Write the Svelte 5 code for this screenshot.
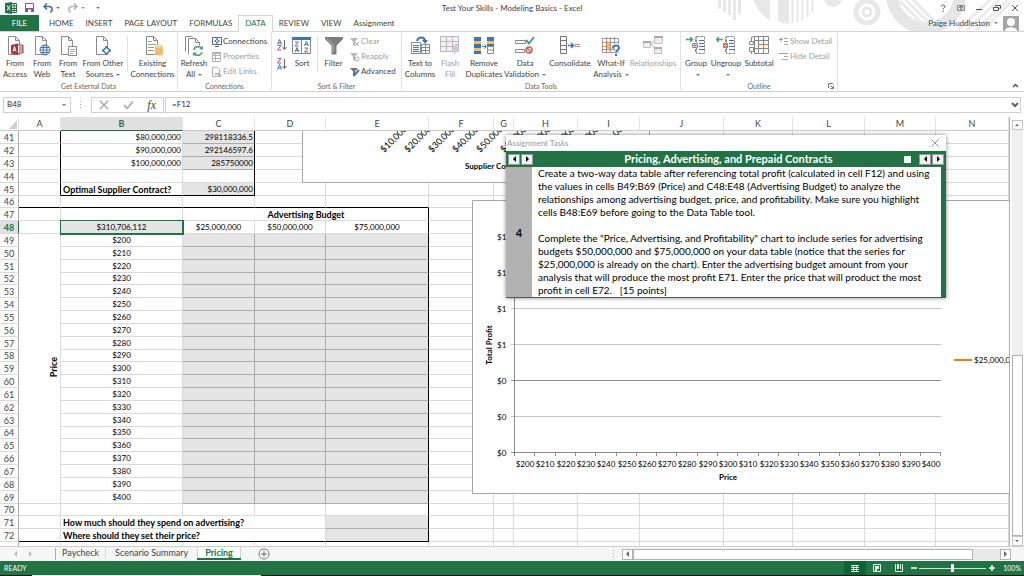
<script>
  const page = '<path d="M3.5 .5h7l4 4v14h-11z" fill="#fff" stroke="#8a8a8a"/><path d="M10.500 .5v4h4" fill="none" stroke="#8a8a8a"/>';
  const art = {
    access: page + '<path d="M6 9l7-1.500v11.500l-7-1.500z" fill="#a4373a"/><path d="M13 9h5v8h-5" fill="#fff" stroke="#a4373a"/><path d="M14 11h4M14 13h4M14 15h4" stroke="#a4373a"/><path d="M8 15.500l1.500-5 1.500 5M8.500 14h2" fill="none" stroke="#fff"/>',
    web: page + '<circle cx="13" cy="14" r="5" fill="#fff" stroke="#3b77b5"/><ellipse cx="13" cy="14" rx="2" ry="5" fill="none" stroke="#3b77b5"/><path d="M8 14h10M9 11.500h8M9 16.500h8" stroke="#3b77b5"/>',
    text: page + '<path d="M10.500 10.500h8v9h-8z" fill="#fff" stroke="#8a8a8a"/><path d="M12 13.500h5M12 15.500h5M12 17.500h3" stroke="#aaa"/>',
    other: page + '<path d="M13.500 10v9M9 14.500h9" stroke="#3b77b5" stroke-width="2"/><path d="M13.500 11l3.500 3.500-3.500 3.500-3.500-3.500z" fill="#fff" stroke="#3b77b5" stroke-width="1.500"/>',
    existing: page + '<path d="M5 5.500h4M5 8.500h8M5 11.500h6M5 14.500h6" stroke="#999"/><path d="M12 10v8c0 2 8 2 8 0v-8z" fill="#ecc06c"/><ellipse cx="16" cy="10" rx="4" ry="1.500" fill="#f6dca5"/>',
    refresh: '<path d="M1.500 15.500v-15h6l1 1" fill="none" stroke="#8a8a8a"/><path d="M4.500 18.500v-16h7l4 4v3M11.500 2.500v4h4" fill="#fff" stroke="#8a8a8a"/><circle cx="14" cy="15" r="5.500" fill="#fff"/><path d="M10 14c.5-4 6-4.500 7.500-1.500M18 16c-.5 4-6 4.500-7.500 1.500" fill="none" stroke="#5da283" stroke-width="1.800"/><path d="M19 9.500v4h-4zM9 20.500v-4h4z" fill="#5da283"/>',
    sort: '<path d="M.5 2.500h18v15h-18z" fill="#fff" stroke="#8a8a8a"/><path d="M0 1h19v3H0z" fill="#3b77b5"/><path d="M9.500 4v13" stroke="#8a8a8a"/><path d="M3 6h3.500l-3.500 4h3.500M12.500 12h3.500l-3.500 4h3.500" fill="none" stroke="#9158ad"/><path d="M3 16l2-4.500 2 4.500M3.500 14.500h3M12.500 10l2-4.500 2 4.500M13 8.500h3" fill="none" stroke="#3b77b5"/>',
    filter: '<path d="M1 1h18v2l-6.500 6.500v9h-5v-9l-6.500-6.500z" fill="#7c7c7c"/><path d="M3 2.500l6 6v8" fill="none" stroke="#bbb"/>',
    columns: '<path d="M1.500 6.500h9v11h-9z" fill="#fff" stroke="#8a8a8a"/><path d="M3 9.500h6M3 11.500h6M3 13.500h6M3 15.500h6" stroke="#3b77b5"/><path d="M11.500 8.500h8v9h-8zM15.500 8v9M12 11.500h7M12 14.500h7" fill="#fff" stroke="#8a8a8a"/><path d="M7 5c1-4 7-5 8-.5" fill="none" stroke="#3b77b5" stroke-width="2"/><path d="M12 4h6l-3 4z" fill="#3b77b5"/>',
    flash: '<path d="M.5 .5h18v15h-18zM6.500 1v14M12.500 1v14M1 5.500h17M1 10.500h17" fill="#f4eff3" stroke="#bcb6bb"/><path d="M15 8h4l-2 4h3l-7 8 2-6h-3z" fill="#cfcacf"/>',
    remove: '<path d="M0 1h7v17H0zM13 1h7v9h-7z" fill="#3b77b5"/><path d="M0 5h7v3H0zM0 12h7v3H0zM13 5h7v3h-7z" fill="#ecc06c"/><path d="M13.500 10.500h6v7h-6zM14 14h6" fill="#fff" stroke="#8a8a8a"/><path d="M8 10.500h4M10.500 8.500l2 2-2 2" fill="none" stroke="#3b77b5"/>',
    validation: '<path d="M.5 4.500h10v3h-10zM.5 13.500h9v3h-9z" fill="#fff" stroke="#8a8a8a"/><path d="M11 4l3 3.500 5-6.500" fill="none" stroke="#4f9d7c" stroke-width="2"/><circle cx="14" cy="14" r="3" fill="#fff" stroke="#d2604a" stroke-width="1.500"/><path d="M12 12l4 4" stroke="#d2604a" stroke-width="1.500"/>',
    consolidate: '<path d="M.5 .5h6v17h-6zM0 4.500h6M0 9.500h6M0 13.500h6" fill="#fff" stroke="#777"/><path d="M8 9.500h5M11 7l2.500 2.500-2.500 2.500" fill="none" stroke="#3b77b5" stroke-width="1.500"/><path d="M20 8.500h-5v2h5" fill="none" stroke="#d9826f"/>',
    whatif: '<path d="M1.500 2.500h16v14h-16zM5.500 1v16M9.500 1v16M13.500 1v16M1 6.500h16M1 10.500h16M1 13.500h16" fill="#fff" stroke="#9a9a9a"/><path d="M5.500 6h4v8h-4z" fill="#eeb286" stroke="#d9793b" stroke-dasharray="2 1"/><path d="M12 12.500c0-4 6-4 6-.5 0 2-3 2-3 4.500M15 18v2" fill="none" stroke="#fff" stroke-width="4"/><path d="M12 12.500c0-4 6-4 6-.5 0 2-3 2-3 4.500M15 17.700v2.300" fill="none" stroke="#3b77b5" stroke-width="2"/>',
    relations: '<path d="M8 8l5-4M8 8l5 6" stroke="#aaa"/><path d="M.5 5.500h7v6h-7zM11.500 .5h8v7h-8zM11.500 11.500h7v6h-7z" fill="#f1edf1" stroke="#c4bec4"/><path d="M0 6h8M11 1h9M11 12h8" stroke="#aaa" stroke-width="2"/>',
    group: '<path d="M0 3.500h6M4 1l2.500 2.500-2.500 2.500" fill="none" stroke="#4f9d7c" stroke-width="1.500"/><path d="M10.500 .5h8v17h-8zM9.500 6v-5M9.500 13v4" fill="#fff" stroke="#888" stroke-dasharray="3 1"/><path d="M6.500 7.500h5v4h-5zM7 9.500h4M9 8v3" fill="#fff" stroke="#888"/><path d="M13 4.500h5M13 7.500h5M13 10.500h5M13 13.500h5" stroke="#3b77b5"/>',
    ungroup: '<path d="M7 3.500h-6M3 1l-2.500 2.500 2.500 2.500" fill="none" stroke="#4f9d7c" stroke-width="1.500"/><path d="M10.500 .5h8v17h-8zM9.500 6v-5M9.500 13v4" fill="#fff" stroke="#888" stroke-dasharray="3 1"/><path d="M7.500 7.500h4v4h-4zM8 11l3-3M8 8l3 3" fill="#fff" stroke="#d2604a"/><path d="M13 4.500h5M13 7.500h5M13 10.500h5M13 13.500h5" stroke="#3b77b5"/>',
    subtotal: '<path d="M5.500 .5h14v17h-14zM9.500 0v17M14.500 0v17M5 4.500h14M5 12.500h14" fill="#fff" stroke="#888"/><path d="M.5 5.500h4v3h-4zM.5 11.500h4v4h-4zM2.500 5v-4h3M2.500 15v3" fill="#fff" stroke="#888"/><path d="M10 8.500h4M15 8.500h4" stroke="#d9793b"/>',
    connections: '<path d="M.5 .5h9v7h-9zM3 9.500h4" fill="#fff" stroke="#666"/><path d="M5 1v6M2 4h6" stroke="#3b77b5"/><circle cx="5" cy="4" r="1.500" fill="#fff" stroke="#3b77b5"/>',
    properties: '<path d="M.5 .5h8v9h-8zM1 3.500h7M1 6.500h7M3.500 1v8" fill="#fff" stroke="#b5afb5"/><path d="M0 1h9" stroke="#b5afb5" stroke-width="2"/>',
    links: '<path d="M.5 .5h5l2 2v7h-7z" fill="#fff" stroke="#b5afb5"/><path d="M3 7h3M6 9h3M6 6l3 3" stroke="#aaa" stroke-width="1.500"/>',
    clear: '<path d="M0 1h8l-3 3.500v4h-2v-4z" fill="#b8b8b8"/><path d="M5 5l4 4M9 5l-4 4" stroke="#aaa"/>',
    reapply: '<path d="M0 1h8l-3 3.500v4h-2v-4z" fill="#b8b8b8"/><circle cx="7" cy="7" r="2" fill="#fff" stroke="#aaa"/>',
    advanced: '<path d="M0 1h8l-3 3.500v4h-2v-4z" fill="#777"/><path d="M3.500 9l5.500-6" stroke="#3b77b5" stroke-width="2"/>',
    show: '<path d="M0 2.500h4M2 .5v4" stroke="#999"/><path d="M5 1.500h4M5 4.500h4M5 7.500h4" stroke="#a9a9a9"/>',
    hide: '<path d="M0 1.500h4" stroke="#999"/><path d="M4 1.500h5M5 4.500h4M3 7.500h6" stroke="#a9a9a9"/>'
  };

  const external = [
    { i: 'access', l: ['From', 'Access'], w: 30 },
    { i: 'web', l: ['From', 'Web'], w: 24 },
    { i: 'text', l: ['From', 'Text'], w: 28 },
    { i: 'other', l: ['From Other', 'Sources'], w: 42, menu: true }
  ];
  const tools = [
    { i: 'columns', l: ['Text to', 'Columns'], w: 36 },
    { i: 'flash', l: ['Flash', 'Fill'], w: 24, off: true },
    { i: 'remove', l: ['Remove', 'Duplicates'], w: 44 },
    { i: 'validation', l: ['Data', 'Validation'], w: 38, menu: true },
    { i: 'consolidate', l: ['Consolidate'], w: 52 },
    { i: 'whatif', l: ['What-If', 'Analysis'], w: 30, menu: true },
    { i: 'relations', l: ['Relationships'], w: 54, off: true }
  ];
  const outline = [
    { i: 'group', l: ['Group', ''], w: 30, menu: true },
    { i: 'ungroup', l: ['Ungroup', ''], w: 30, menu: true },
    { i: 'subtotal', l: ['Subtotal'], w: 36 }
  ];

  const letters = 'ABCDEFGHIJKLMN'.split('');
  const widths = [42, 122, 72, 71, 103, 65, 20, 64, 62, 84, 69, 72, 71];
  const top = {
    41: ['$80,000,000', '298118336.5'],
    42: ['$90,000,000', '292146597.6'],
    43: ['$100,000,000', '285750000'],
    44: ['', ''],
    45: ['Optimal Supplier Contract?', '$30,000,000']
  };

  function cellsFor(n) {
    const out = [];
    const add = (t = '', c = '', span = 1, rows = 1) => out.push({ t, c, span, rows });
    if (n <= 45) {
      const end = n === 45 ? ' kb' : '';
      add('', 'kr');
      add(top[n][0], (n === 45 ? 'bold' : 'right') + end);
      add(top[n][1], 'right kr' + (n === 44 ? '' : ' fill') + end);
      add(); add();
    } else if (n === 46) {
      for (let k = 0; k < 5; k++) add('', 'kb');
    } else if (n === 47) {
      add(); add();
      add('Advertising Budget', 'bold center kr', 3);
    } else if (n === 48) {
      add();
      add('$310,706,112', 'center fill active');
      add('$25,000,000', 'center');
      add('$50,000,000', 'center');
      add('$75,000,000', 'center kr');
    } else if (n <= 69) {
      if (n === 49) add('Price', 'axis', 1, 21);
      add('$' + (200 + (n - 49) * 10), 'center');
      add('', 'fill'); add('', 'fill'); add('', 'fill kr');
    } else if (n === 70) {
      add(); add(); add(); add(); add('', 'kr');
    } else if (n <= 72) {
      const end = n === 72 ? ' kb' : '';
      add('', end);
      add(n === 71 ? 'How much should they spend on advertising?' : 'Where should they set their price?', 'bold' + end, 3);
      add('', 'fill kr' + end);
    } else {
      for (let k = 0; k < 5; k++) add();
    }
    for (let k = 0; k < 9; k++) add();
    return out;
  }
  const rows = Array.from({ length: 33 }, (_, k) => ({ n: 41 + k, cells: cellsFor(41 + k) }));

  const supplierTicks = Array.from({ length: 10 }, (_, k) => '$' + (k + 1) * 10 + ',000,000');
  const priceTicks = Array.from({ length: 21 }, (_, k) => '$' + (200 + k * 10));
  const profitTicks = ['$1', '$1', '$1', '$1', '$0', '$0', '$0'];
  let zoom = $state(50);
</script>

{#snippet big(b)}
  <button class="big" class:off={b.off} style="width:{b.w}px">
    <svg width="20" height="20" viewBox="0 0 20 20" aria-hidden="true">{@html art[b.i]}</svg>
    {#each b.l as line, k}
      <span>{line}{#if b.menu && k === b.l.length - 1}<i class="caret"></i>{/if}</span>
    {/each}
  </button>
{/snippet}

{#snippet small(icon, text, off)}
  <button class="small" class:off>
    <svg width="10" height="10" viewBox="0 0 10 10" aria-hidden="true">{@html art[icon]}</svg>{text}
  </button>
{/snippet}

<div class="app">
  <header>
    <svg class="pattern" width="300" height="31" viewBox="0 0 300 31" aria-hidden="true">
      <g fill="#e8e8e8">
        <path d="M0 0h3v9H0zM5 0h3v12H5zM10 0h3v15h-3zM15 0h3v20h-3zM20 0h3v14h-3zM35 0h17v20q-10-5-17-20z" />
        <path d="M46 0h6v20q-4-2-6-5zM60 0h11v24q-6 0-11-3z" />
        <circle cx="115" cy="-2" r="9" />
      </g>
      <path d="M74.500 0v23M79.500 0v22M84.500 0v20M89.500 0v17M94.500 0v12" stroke="#e8e8e8" stroke-width="2" />
      <circle cx="149" cy="12" r="11" fill="none" stroke="#e8e8e8" stroke-width="5" />
      <circle cx="149" cy="12" r="4" fill="none" stroke="#e8e8e8" stroke-width="3" />
      <circle cx="208" cy="-6" r="34" fill="none" stroke="#e6e6e6" stroke-width="12" />
      <path d="M182 1l26 26M188 0l24 24M195 0l20 20M240 30l32-30M249 30l32-30M258 30l32-30M267 28l26-26" stroke="#ebebeb" stroke-width="3" />
    </svg>
    <div class="titlebar">
      <div class="quick">
        <svg width="12" height="12" viewBox="0 0 12 12" aria-label="Excel"><path d="M6.500 1.500h5v9h-5M7 4h4M7 6.500h4M7 8.500h4M9 2v8" fill="#fff" stroke="#217346" /><path d="M0 1l7-1v12l-7-1z" fill="#217346" /><path d="M2 3.500l3 5M5 3.500l-3 5" stroke="#fff" /></svg>
        <button aria-label="Save"><svg width="10" height="10" viewBox="0 0 10 10"><path d="M.5 .5h8v8h-8z" fill="#fff" stroke="#7b5aa6" /><path d="M0 5h9v4H0z" fill="#7b5aa6" /><path d="M3 6.500h3v3H3z" fill="#fff" /></svg></button>
        <button aria-label="Undo"><svg width="17" height="10" viewBox="0 0 17 10"><path d="M1 3.500h5c4 0 4 5 1 5.500M4 .5l-3 3 3 3" fill="none" stroke="#3b70b0" stroke-width="1.500" /><path d="M13 4h4l-2 2z" fill="#777" /></svg></button>
        <button aria-label="Redo"><svg width="17" height="10" viewBox="0 0 17 10"><path d="M9 3.500h-5c-4 0-4 5-1 5.500M6 .5l3 3-3 3" fill="none" stroke="#b4b4b4" stroke-width="1.500" /><path d="M13 4h4l-2 2z" fill="#999" /></svg></button>
        <button aria-label="Customize toolbar"><i class="caret"></i></button>
      </div>
      <h1>Test Your Skills - Modeling Basics - Excel</h1>
      <div class="winbtns">
        <button aria-label="Help"><svg width="8" height="8" viewBox="0 0 8 8"><path d="M2 2.500c0-2 4-2 4 0 0 1.500-2 1-2 3M4 6.500v1.500" fill="none" stroke="#555" /></svg></button>
        <button aria-label="Ribbon display"><svg width="8" height="8" viewBox="0 0 8 8"><path d="M.5 1.500h7v5h-7z" fill="#ddd" stroke="#888" /><path d="M4 2.500v4M2 4l2-2 2 2" fill="none" stroke="#666" /></svg></button>
        <button aria-label="Minimize"><svg width="8" height="8" viewBox="0 0 8 8"><path d="M1 5.500h6" stroke="#555" /></svg></button>
        <button aria-label="Restore"><svg width="8" height="8" viewBox="0 0 8 8"><path d="M2.500 2.500v-1h5v3h-1M.5 3.500h5v3h-5z" fill="none" stroke="#555" /></svg></button>
        <button aria-label="Close"><svg width="8" height="8" viewBox="0 0 8 8"><path d="M1 1l6 6M7 1l-6 6" stroke="#555" /></svg></button>
      </div>
    </div>
    <nav>
      <button class="file">FILE</button>
      {#each ['HOME', 'INSERT', 'PAGE LAYOUT', 'FORMULAS', 'DATA', 'REVIEW', 'VIEW', 'Assignment'] as tab}
        <button class="tab" class:current={tab === 'DATA'}>{tab}</button>
      {/each}
      <button class="user">Paige Huddleston<i class="caret"></i>
        <svg width="16" height="15" viewBox="0 0 16 15" aria-hidden="true"><path d="M0 0h16v15H0z" fill="#a5a5a5" /><circle cx="8" cy="6" r="4" fill="#fff" /><path d="M2 15c0-5 12-5 12 0z" fill="#fff" /></svg>
      </button>
    </nav>
  </header>

  <section class="ribbon">
    <div class="group">
      <div class="items">
        {#each external as b}{@render big(b)}{/each}
        <hr />
        {@render big({ i: 'existing', l: ['Existing', 'Connections'], w: 49 })}
      </div>
      <span class="label">Get External Data</span>
    </div>
    <div class="group links">
      <div class="items">
        {@render big({ i: 'refresh', l: ['Refresh', 'All'], w: 32, menu: true })}
        <div class="stack">
          {@render small('connections', 'Connections', false)}
          {@render small('properties', 'Properties', true)}
          {@render small('links', 'Edit Links', true)}
        </div>
      </div>
      <span class="label">Connections</span>
    </div>
    <div class="group sorting">
      <div class="items">
        <div class="az">
          <button aria-label="Sort A to Z"><svg width="10" height="12" viewBox="0 0 10 12"><path d="M.5 5.500l2-5 2 5M1 4h3" fill="none" stroke="#3b77b5" /><path d="M.5 6.500h3.500l-3.500 4.500h4" fill="none" stroke="#9158ad" /><path d="M7.500 1v9M5.500 8l2 2.500 2-2.500" fill="none" stroke="#666" /></svg></button>
          <button aria-label="Sort Z to A"><svg width="10" height="12" viewBox="0 0 10 12"><path d="M.5 .5h3.500l-3.500 4.500h4" fill="none" stroke="#9158ad" /><path d="M.5 11.500l2-5 2 5M1 10h3" fill="none" stroke="#3b77b5" /><path d="M7.500 1v9M5.500 8l2 2.500 2-2.500" fill="none" stroke="#666" /></svg></button>
        </div>
        {@render big({ i: 'sort', l: ['Sort'], w: 20 })}
        <hr />
        {@render big({ i: 'filter', l: ['Filter'], w: 31 })}
        <div class="stack tight">
          {@render small('clear', 'Clear', true)}
          {@render small('reapply', 'Reapply', true)}
          {@render small('advanced', 'Advanced', false)}
        </div>
      </div>
      <span class="label">Sort &amp; Filter</span>
    </div>
    <div class="group">
      <div class="items">{#each tools as b}{@render big(b)}{/each}</div>
      <span class="label">Data Tools</span>
    </div>
    <div class="group outline">
      <div class="items">
        {#each outline as b}{@render big(b)}{/each}
        <div class="stack">
          {@render small('show', 'Show Detail', true)}
          {@render small('hide', 'Hide Detail', true)}
        </div>
      </div>
      <span class="label">Outline</span>
      <svg class="launch" width="6" height="6" viewBox="0 0 6 6" aria-hidden="true"><path d="M.5 5v-4.500h4.500M2.500 2.500l3 3M5.500 2.500v3h-3" fill="none" stroke="#777" /></svg>
    </div>
    <button class="collapse" aria-label="Collapse ribbon"><svg width="7" height="5" viewBox="0 0 7 5"><path d="M1 4l2.500-2.500 2.500 2.500" fill="none" stroke="#555" stroke-width="1.500" /></svg></button>
  </section>

  <section class="formula">
    <div class="namebox"><input aria-label="Name box" value="B48" /><i class="caret"></i></div>
    <span class="dots"></span>
    <div class="entry">
      <button aria-label="Cancel"><svg width="10" height="10" viewBox="0 0 10 10"><path d="M1 1l8 8M9 1l-8 8" stroke="#a9a9a9" stroke-width="1.500" /></svg></button>
      <button aria-label="Enter"><svg width="11" height="10" viewBox="0 0 11 10"><path d="M1 5l3 3.500 6-7" fill="none" stroke="#b9b9b9" stroke-width="2" /></svg></button>
      <button class="fx">fx</button>
    </div>
    <div class="bar"><input aria-label="Formula" value="=F12" /><svg width="8" height="6" viewBox="0 0 8 6" aria-hidden="true"><path d="M1 1l3 3 3-3" fill="none" stroke="#666" stroke-width="2" /></svg></div>
  </section>

  <main>
    <div class="sheet">
      <table>
        <colgroup>
          <col style="width:19px" />
          {#each widths as w}<col style="width:{w}px" />{/each}
          <col />
        </colgroup>
        <thead>
          <tr><th class="corner" aria-label="Select all"></th>{#each letters as l}<th class:picked={l === 'B'}>{l}</th>{/each}</tr>
        </thead>
        <tbody>
          {#each rows as r}
            <tr>
              <th class:picked={r.n === 48}>{r.n > 72 ? '' : r.n}</th>
              {#each r.cells as c}
                <td class={c.c} colspan={c.span} rowspan={c.rows}>{#if c.c === 'axis'}<span>{c.t}</span>{:else}{c.t}{/if}</td>
              {/each}
            </tr>
          {/each}
        </tbody>
      </table>

      <div class="floating">
        <svg class="chart supplier" width="348" height="52" viewBox="0 0 348 52">
          <path d="M.5 0v51.500h347V0" fill="#fff" stroke="#a6a6a6" />
          {#each supplierTicks as t, k}
            <text class="slant" transform="translate({82 + 24 * k} 22) rotate(-45)">{t}</text>
          {/each}
          <text class="b" x="163" y="38">Supplier Contract</text>
        </svg>

        <svg class="chart profit" width="560" height="294" viewBox="0 0 560 294">
          <path d="M.5 .5h559v293h-559z" fill="#fff" stroke="#a6a6a6" />
          {#each profitTicks as t, k}
            <path d="M39 {36.5 + 36 * k}h430" stroke={k === 4 || k === 6 ? '#8c8c8c' : '#c4c4c4'} />
            <text x="25" y={40 + 36 * k}>{t}</text>
          {/each}
          <path d="M42.500 20v236" stroke="#8c8c8c" />
          {#each priceTicks as t, k}
            <path d="M{42.5 + Math.round((k + 1) * 20.3)} 253v3" stroke="#8c8c8c" />
            <text class="mid" x={53 + Math.round(k * 20.3)} y="267">{t}</text>
          {/each}
          <text class="b mid" x="256" y="280">Price</text>
          <text class="b mid" transform="translate(20 145) rotate(-90)">Total Profit</text>
          <path d="M482 160h18" stroke="#f47a20" stroke-width="2" />
          <text x="502" y="163">$25,000,000</text>
        </svg>

        <aside class="tasks">
          <div class="caption">Assignment Tasks<button aria-label="Close tasks"><svg width="8" height="8" viewBox="0 0 8 8"><path d="M.5 .5l7 7M7.500 .5l-7 7" stroke="#999" /></svg></button></div>
          <div class="heading">
            <span class="pair"><button aria-label="First task"><i class="lt"></i></button><button aria-label="Next task"><i class="rt"></i></button></span>
            <h2>Pricing, Advertising, and Prepaid Contracts</h2>
            <input type="checkbox" aria-label="Task done" />
            <span class="pair"><button aria-label="Previous section"><i class="lt"></i></button><button aria-label="Next section"><i class="rt"></i></button></span>
          </div>
          <div class="body">
            <b>4</b>
            <p>Create a two-way data table after referencing total profit (calculated in cell F12) and using<br />the values in cells B49:B69 (Price) and C48:E48 (Advertising Budget) to analyze the<br />relationships among advertising budget, price, and profitability. Make sure you highlight<br />cells B48:E69 before going to the Data Table tool.<br /><br />Complete the "Price, Advertising, and Profitability" chart to include series for advertising<br />budgets $50,000,000 and $75,000,000 on your data table (notice that the series for<br />$25,000,000 is already on the chart). Enter the advertising budget amount from your<br />analysis that will produce the most profit E71. Enter the price that will product the most<br />profit in cell E72. &nbsp; [15 points]</p>
          </div>
        </aside>
      </div>
    </div>
    <div class="vscroll">
      <button aria-label="Scroll up"><i class="ut"></i></button>
      <span class="gap"></span>
      <span class="thumb"></span>
      <button aria-label="Scroll down"><i class="dt"></i></button>
    </div>
  </main>

  <section class="tabs">
    <div class="nav"><i class="lt"></i><i class="rt"></i></div>
    <button>Paycheck</button>
    <button class="mid">Scenario Summary</button>
    <button class="on">Pricing</button>
    <button class="add" aria-label="New sheet"><svg width="12" height="12" viewBox="0 0 12 12"><circle cx="6" cy="6" r="5" fill="#fff" stroke="#777" /><path d="M6 3v6M3 6h6" stroke="#666" /></svg></button>
    <div class="hscroll">
      <span class="dots"></span>
      <button aria-label="Scroll left"><i class="lt"></i></button>
      <span class="thumb"></span>
      <span class="gap"></span>
      <button aria-label="Scroll right"><i class="rt"></i></button>
    </div>
  </section>

  <footer>
    <span class="ready">READY</span>
    <button class="view on" aria-label="Normal"><svg width="8" height="8" viewBox="0 0 8 8"><path d="M0 1.500h8M0 3.500h8M0 5.500h8M0 7.500h8M2.500 1v7M5.500 1v7" stroke="#dff0e6" /></svg></button>
    <button class="view" aria-label="Page layout"><svg width="8" height="8" viewBox="0 0 8 8"><path d="M.5 .5h7v7h-7z" fill="none" stroke="#dff0e6" /><path d="M2 2h4v3H4v2H2z" fill="#dff0e6" /></svg></button>
    <button class="view" aria-label="Page break"><svg width="8" height="8" viewBox="0 0 8 8"><path d="M.5 0v7.500h7V0" fill="none" stroke="#dff0e6" /><path d="M2 0h2v5H2zM5 0h1v5H5z" fill="#dff0e6" /></svg></button>
    <button class="step" aria-label="Zoom out"><svg width="6" height="6" viewBox="0 0 6 6"><path d="M0 3h6" stroke="#fff" stroke-width="1.500" /></svg></button>
    <input type="range" aria-label="Zoom" bind:value={zoom} />
    <button class="step" aria-label="Zoom in"><svg width="6" height="6" viewBox="0 0 6 6"><path d="M0 3h6M3 0v6" stroke="#fff" stroke-width="1.500" /></svg></button>
    <span class="pct">100%</span>
  </footer>
  <div class="edge"><span></span></div>
</div>

<style>
  :global(body) { margin: 0; background: #fff; }
  * { box-sizing: border-box; }
  .app { display: flex; flex-direction: column; height: 100vh; min-height: 576px; overflow: hidden; background: #fff; color: #444; font: 8px/11px Lato, "Open Sans", sans-serif; }
  button { display: flex; align-items: center; justify-content: center; margin: 0; padding: 0; border: 0; background: none; color: inherit; font: inherit; white-space: nowrap; }
  input { margin: 0; padding: 0; border: 0; outline: 0; background: none; color: #333; font: inherit; min-width: 0; }
  svg { display: block; flex: none; }
  i { display: inline-block; flex: none; }
  .caret { border: 2px solid transparent; border-top-color: #777; border-bottom: 0; margin-left: 3px; vertical-align: middle; }
  .lt, .rt { border: 3px solid transparent; width: 0; height: 0; }
  .lt { border-right-color: currentColor; border-left: 0; }
  .rt { border-left-color: currentColor; border-right: 0; }
  .ut, .dt { border: 2px solid transparent; width: 0; height: 0; }
  .ut { border-bottom-color: currentColor; border-top: 0; }
  .dt { border-top-color: currentColor; border-bottom: 0; }
  .dots { width: 1px; height: 8px; background: repeating-linear-gradient(#aaa 0 1px, transparent 1px 3px); }

  header { position: relative; flex: none; }
  .pattern { position: absolute; right: 6px; top: 0; }
  .titlebar, nav { position: relative; display: flex; align-items: center; }
  .titlebar { height: 15px; justify-content: space-between; }
  .quick { display: flex; align-items: center; gap: 8px; padding-left: 5px; flex: 1; }
  h1 { margin: 0; padding-top: 1px; font: inherit; color: #444; }
  .winbtns { display: flex; flex: 1; justify-content: flex-end; gap: 10px; padding-right: 5px; }
  nav { height: 17px; border-bottom: 1px solid #d4d4d4; align-items: stretch; }
  .file { width: 39px; background: #217346; color: #fff; margin-right: 4px; }
  .tab { padding: 0 5px; border: 1px solid transparent; border-bottom: 0; }
  .tab.current { color: #217346; border-color: #d4d4d4; background: #fff; padding: 0 6px 1px; margin-bottom: -1px; }
  .user { margin-left: auto; padding-right: 5px; gap: 1px; }
  .user svg { margin-left: 4px; }

  .ribbon { display: flex; flex: none; height: 60px; border-bottom: 1px solid #cfcfcf; }
  .group { position: relative; display: flex; flex-direction: column; justify-content: space-between; padding: 4px 0 0; margin-bottom: 1px; border-right: 1px solid #e1e1e1; }
  .items { display: flex; }
  .group .label { text-align: center; font-size: 7px; line-height: 8px; color: #666; }
  .links { width: 94px; }
  .sorting { width: 130px; }
  .outline { width: 157px; }
  hr { width: 1px; height: 36px; margin: 0 0 0 3px; border: 0; background: #e1e1e1; }
  .sorting hr { margin-left: 5px; }
  .big { flex: none; flex-direction: column; justify-content: flex-start; }
  .big svg { margin-bottom: 2px; }
  .big span { height: 11px; }
  .stack { display: flex; flex-direction: column; gap: 4px; padding-left: 2px; }
  .stack.tight { padding-left: 1px; }
  .small { justify-content: flex-start; gap: 1px; height: 11px; }
  .off { color: #a0a0a0; }
  .az { display: flex; flex-direction: column; gap: 7px; width: 20px; align-items: center; padding-top: 3px; }
  .launch { position: absolute; right: 3px; bottom: 1px; }
  .collapse { margin: auto 5px 3px auto; }

  .formula { display: flex; flex: none; align-items: center; height: 25px; padding: 0 3px; }
  .namebox, .entry, .bar { display: flex; align-items: center; height: 16px; border: 1px solid #cfcfcf; }
  .namebox { width: 68px; padding: 0 4px 0 3px; }
  .namebox input, .bar input { flex: 1; }
  .formula .dots { margin: 0 10px 0 9px; }
  .entry { width: 73px; justify-content: space-between; padding: 0 7px 0 7px; margin-right: 1px; }
  .fx { font: italic 12px/14px "Liberation Serif", serif; color: #444; }
  .bar { flex: 1; padding: 0 1px 0 6px; }

  main { display: flex; flex: 1; min-height: 0; }
  .sheet { position: relative; flex: 1; min-width: 0; overflow: hidden; border-right: 1px solid #b0b0b0; }
  table { width: 100%; border-collapse: separate; border-spacing: 0; table-layout: fixed; }
  th, td { padding: 0; line-height: 11px; height: 13px; white-space: nowrap; border: 0 solid #dadada; border-width: 0 1px 1px 0; }
  td { color: #000; padding: 0 1px; overflow: hidden; }
  tbody tr:nth-child(6n) > * { height: 12px; }
  th { font-weight: 400; font-size: 9px; color: #444; }
  thead th { height: 14px; border-bottom-color: #c8c8c8; border-right-color: #e4e4e4; }
  tbody th { border-right-color: #ababab; }
  .corner { background: linear-gradient(135deg, transparent 50%, #d0d0d0 50%) no-repeat 8px 3px / 9px 9px; }
  thead .picked { background: #e1e1e1; color: #217346; font-weight: 700; border-bottom-color: #217346; }
  tbody .picked { background: #e1e1e1; color: #217346; font-weight: 700; border-right-color: #217346; }
  .bold { font-weight: 700; font-size: 9px; padding-left: 2px; }
  .right { text-align: right; }
  .center { text-align: center; }
  .fill { background: #e5e5e5; border-color: #ababab; }
  .kr { border-right-color: #000; }
  .kb { border-bottom-color: #000; }
  .active { position: relative; outline: 1px solid #217346; border-color: #217346; }
  .axis { text-align: right; vertical-align: middle; }
  .axis span { display: inline-block; writing-mode: vertical-rl; transform: rotate(180deg); font-weight: 700; font-size: 9px; }

  .floating { position: absolute; inset: 14px 0 0 0; overflow: hidden; }
  .chart { position: absolute; font-size: 8px; }
  .chart text { fill: #000; }
  .chart .slant { font-size: 9px; }
  .chart .b { font-weight: 700; }
  .chart .mid { text-anchor: middle; }
  .supplier { left: 302px; top: 0; }
  .profit { left: 472px; top: 69px; }
  .tasks { position: absolute; left: 506px; top: 4px; width: 440px; background: #fff; border-bottom: 1px solid #555; box-shadow: 0 0 4px rgba(0, 0, 0, .5); color: #000; }
  .caption { display: flex; align-items: center; justify-content: space-between; height: 16px; padding: 0 7px 0 1px; color: #999; }
  .heading { display: flex; align-items: center; height: 16px; padding: 0 2px; background: #217346; }
  h2 { flex: 1; margin: 0; padding-left: 20px; text-align: center; font-size: 11px; line-height: 14px; color: #fff; }
  .heading input { appearance: none; width: 7px; height: 7px; background: #fff; margin-right: 8px; }
  .pair { display: flex; gap: 1px; }
  .pair button { width: 12px; height: 11px; background: #f0f0f0; border: 1px solid #999; color: #000; }
  .body { display: flex; border-right: 5px solid #217346; height: 130px; overflow: hidden; }
  .body b { display: flex; align-items: center; justify-content: center; width: 26px; flex: none; background: #b2b2b2; font-size: 11px; }
  .body p { margin: 0; padding: 0 0 0 6px; font-size: 10px; line-height: 13px; white-space: nowrap; }

  .vscroll { display: flex; flex-direction: column; align-items: center; width: 14px; flex: none; padding: 3px 0 0; }
  .vscroll button { width: 11px; height: 10px; border: 1px solid #c2c2c2; background: #fff; color: #666; flex: none; }
  .vscroll .gap { width: 11px; flex: 226; background: #f0f0f0; }
  .vscroll .thumb { width: 11px; flex: 180; border: 1px solid #b2b2b2; background: #fff; }

  .tabs { display: flex; flex: none; height: 15px; background: #f6f6f6; border-top: 1px solid #cfcfcf; font-size: 9px; }
  .nav { display: flex; align-items: center; gap: 12px; width: 56px; padding-left: 14px; margin: 1px 0; border-right: 1px solid #aaa; color: #bbb; }
  .tabs > button { padding: 0 6px; margin-bottom: 3px; }
  .tabs > .mid { padding: 0 9px; border-left: 1px solid #d4d4d4; }
  .tabs > .on { padding: 0 7px; background: #fff; color: #217346; font-weight: 700; border: 1px solid #d4d4d4; border-width: 0 1px; box-shadow: 0 2px #217346; }
  .tabs > .add { padding: 0 17px; margin-bottom: 1px; }
  .hscroll { display: flex; align-items: center; margin-left: auto; width: 411px; padding-right: 13px; }
  .hscroll .dots { margin-right: 8px; }
  .hscroll button { width: 11px; height: 11px; border: 1px solid #b2b2b2; background: #fff; color: #666; flex: none; }
  .hscroll .thumb { flex: 341; height: 11px; background: #fff; border: 1px solid #b2b2b2; }
  .hscroll .gap { flex: 27; height: 11px; background: #e8e8e8; }

  footer { display: flex; flex: none; align-items: center; height: 14px; background: #217346; color: #fff; font-size: 7px; padding-right: 3px; }
  .ready { margin: 0 auto 0 4px; }
  .view { width: 22px; height: 14px; }
  .view.on { background: #0a6332; }
  .step { width: 6px; margin-left: 1px; }
  footer input { appearance: none; width: 67px; height: 8px; margin: 0 2px; background: linear-gradient(#cfe3d7, #cfe3d7) no-repeat center / 100% 1px; }
  footer input::-webkit-slider-thumb { appearance: none; width: 3px; height: 8px; background: #fff; }
  .pct { margin-left: 8px; }
  .edge { flex: none; height: 1px; background: #111; }
  .edge span { display: block; width: 229px; height: 1px; margin-left: 32px; background: #e6f0ea; }
</style>
